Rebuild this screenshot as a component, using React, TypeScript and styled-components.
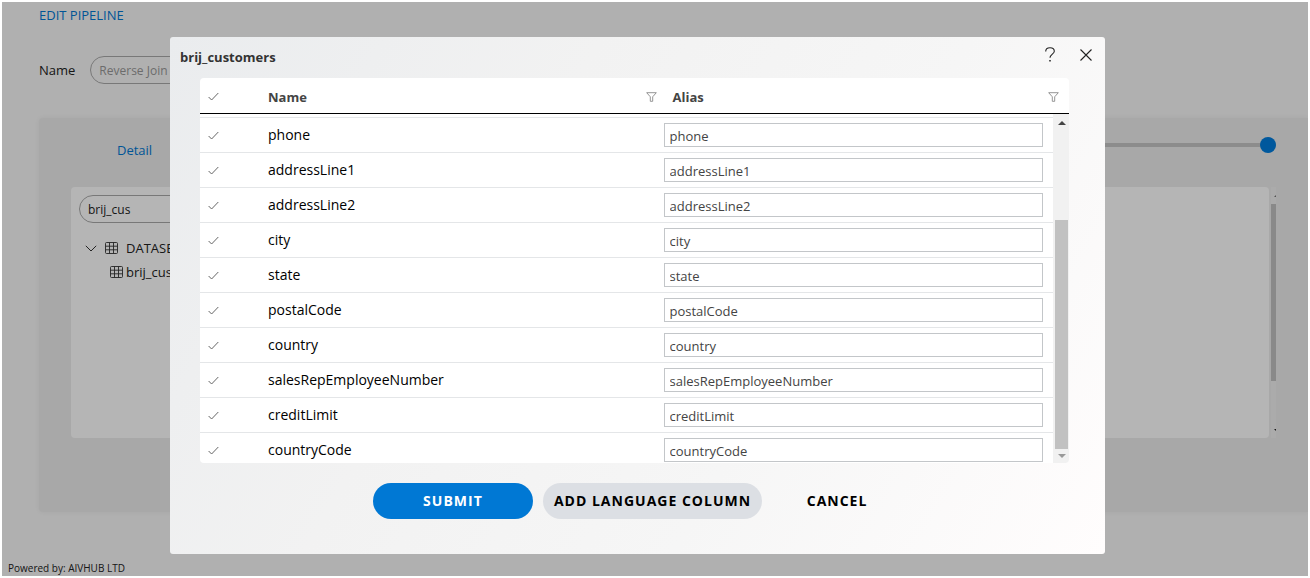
import React, { useState } from "react";
import styled, { createGlobalStyle } from "styled-components";

const GlobalStyle = createGlobalStyle`
  *, *::before, *::after { box-sizing: border-box; }
  html, body, #root { height: 100%; }
  body {
    margin: 0;
    background: #fff;
    color: #222;
    font-family: "Open Sans", "Noto Sans", sans-serif;
    font-size: 13px;
    line-height: 20px;
    overflow: hidden;
  }
  button, input { font: inherit; color: inherit; }
`;

const Frame = styled.div`
  height: 100%;
  padding: 2px;
`;

const Page = styled.div`
  position: relative;
  height: 100%;
  display: flex;
  flex-direction: column;
  background: #f8f8f8;
  overflow: hidden;
`;

const Content = styled.main`
  flex: 1;
  min-height: 0;
  display: flex;
  flex-direction: column;
  padding: 3px 0 46px 37px;
`;

const PageTitle = styled.h1`
  margin: 0;
  color: #0078d4;
  font-size: 13px;
  font-weight: 500;
  line-height: 20px;
`;

const NameRow = styled.div`
  display: flex;
  align-items: center;
  gap: 15px;
  margin: 31px 0 34px;
`;

const PillInput = styled.input<{ $muted?: boolean }>`
  width: ${(p) => (p.$muted ? 260 : 240)}px;
  height: 28px;
  padding: 0 8px;
  border: 1px solid #aaa;
  border-radius: 14px;
  background: transparent;
  color: ${(p) => (p.$muted ? "#999" : "#222")};
  font-size: 12px;
  outline: none;
`;

const Panel = styled.section`
  flex: 1;
  display: flex;
  flex-direction: column;
  padding: 17px 32px 74px;
  border-radius: 4px 0 0 4px;
  background: #ededed;
  box-shadow: 0 0 5px rgba(0, 0, 0, 0.06);
`;

const StepBar = styled.div`
  display: flex;
  justify-content: space-between;
  height: 52px;
`;

const StepLink = styled.a`
  margin: 5px 0 0 46px;
  height: 20px;
  color: #0078d4;
  text-decoration: none;
`;

const Slider = styled.input`
  appearance: none;
  width: 320px;
  height: 20px;
  margin: 0;
  background: transparent;

  &::-webkit-slider-runnable-track {
    height: 4px;
    background: #c6c6c6;
  }
  &::-webkit-slider-thumb {
    appearance: none;
    width: 16px;
    height: 16px;
    margin-top: -6px;
    border-radius: 50%;
    background: #007ddd;
  }
`;

const Workspace = styled.div`
  flex: 1;
  display: flex;
  gap: 2px;
`;

const Card = styled.div`
  flex: 1;
  padding: 8px;
  border-radius: 4px;
  background: #fff;
`;

const EdgeScroll = styled.div`
  width: 5px;
  display: flex;
  flex-direction: column;
  background: #f1f1f1;
`;

const EdgeGap = styled.div`
  height: 17px;
  padding: 8px 0 0 3px;
`;

const EdgeThumb = styled.div`
  flex: 178;
  background: #c1c1c1;
`;

const EdgeRest = styled.div`
  flex: 40;
`;

const Tree = styled.ul`
  margin: 13px 0 0;
  padding: 0;
  list-style: none;
`;

const TreeItem = styled.li<{ $level: number }>`
  display: flex;
  align-items: center;
  gap: ${(p) => (p.$level ? 3 : 8)}px;
  height: 24px;
  padding-left: ${(p) => (p.$level ? 31 : 6)}px;
`;

const PageFooter = styled.footer`
  padding: 0 6px;
  height: 18px;
  font-size: 10px;
  line-height: 20px;
`;

const Overlay = styled.div`
  position: absolute;
  inset: 0;
  display: flex;
  padding: 35px 203px 22px 168px;
  background: rgba(0, 0, 0, 0.29);
`;

const Dialog = styled.div`
  flex: 1;
  min-width: 0;
  display: flex;
  flex-direction: column;
  border-radius: 3px;
  background: linear-gradient(120deg, #eaecee 0%, #f2f2f2 35%, #f6f6f6 65%, #fffdfd 100%);
`;

const DialogHeader = styled.header`
  display: flex;
  align-items: center;
  height: 41px;
  padding: 0 10px 2px;
`;

const DialogTitle = styled.h2`
  flex: 1;
  margin: 0;
  color: #333;
  font-size: 13px;
  font-weight: 700;
  line-height: 20px;
`;

const IconButton = styled.button`
  display: grid;
  place-items: center;
  width: 18px;
  height: 18px;
  margin: 0 0 4px 18px;
  padding: 0;
  border: 0;
  background: none;
  color: #222;
`;

const GridBox = styled.div`
  position: relative;
  flex: 1;
  min-height: 0;
  display: flex;
  margin: 0 36px 0 30px;
  border-radius: 4px;
  background: #fff;
  overflow: hidden;
`;

const Table = styled.table`
  flex: 1;
  display: flex;
  flex-direction: column;
`;

const TableHead = styled.thead`
  display: block;
  border-bottom: 1px solid #000;
`;

const TableBody = styled.tbody`
  flex: 1;
  min-height: 0;
  display: block;
  padding: 3px 16px 0 0;
  overflow: hidden;
`;

const Row = styled.tr`
  display: grid;
  grid-template-columns: 60px 1fr 1fr;
  height: 35px;
  border-bottom: 1px solid #e4e6e8;

  ${TableHead} & {
    border-bottom: 0;
  }
  ${TableBody} &:first-child {
    height: 36px;
    border-top: 1px solid #e4e6e8;
  }
`;

const HeadCell = styled.th`
  display: flex;
  align-items: center;
  justify-content: space-between;
  padding: 2px 8px 0;
  color: #444;
  font-size: 13px;
  font-weight: 700;
  text-align: left;

  &:last-child {
    padding-right: 10px;
  }
`;

const Cell = styled.td`
  display: flex;
  align-items: center;
  padding: 0 10px 0 8px;
  color: #000;
  font-size: 14px;

  &:last-child {
    padding-left: 7px;
  }
`;

const CheckLabel = styled.label`
  position: relative;
  display: flex;
`;

const CheckInput = styled.input`
  position: absolute;
  inset: 0;
  margin: 0;
  opacity: 0;
`;

const AliasInput = styled.input`
  width: 100%;
  height: 24px;
  padding: 2px 5px 0;
  border: 1px solid #c3c6c9;
  border-radius: 0;
  background: #fff;
  color: #444;
  font-size: 13px;
  outline: none;
`;

const ScrollBar = styled.div`
  position: absolute;
  top: 36px;
  right: 0;
  bottom: 0;
  width: 16px;
  display: flex;
  flex-direction: column;
  padding: 0 1px 0 2px;
  background: #f1f1f1;
`;

const ScrollArrow = styled.div<{ $end?: boolean }>`
  display: grid;
  place-items: center;
  height: ${(p) => (p.$end ? 14 : 17)}px;
`;

const ScrollSpace = styled.div`
  flex: 89;
`;

const ScrollThumb = styled.div`
  flex: 230;
  background: #c1c1c1;
`;

const Actions = styled.footer`
  display: flex;
  justify-content: center;
  gap: 10px;
  padding: 20px 30px 35px;
`;

const ActionButton = styled.button<{ $kind: "primary" | "neutral" | "plain" }>`
  min-width: ${(p) => (p.$kind === "plain" ? 130 : 160)}px;
  height: 36px;
  padding: 0 11px;
  border: 0;
  border-radius: 18px;
  background: ${(p) =>
    p.$kind === "primary" ? "#0078d4" : p.$kind === "neutral" ? "#dcdfe4" : "transparent"};
  color: ${(p) => (p.$kind === "primary" ? "#fff" : "#000")};
  font-weight: 700;
  font-size: 14px;
  letter-spacing: 1px;
`;

const Tick = () => (
  <svg width="11" height="9" viewBox="0 0 11 9" fill="none" stroke="#666" aria-hidden="true">
    <path d="M.6 5 3.6 8 10.3 1" />
  </svg>
);

const Funnel = () => (
  <svg width="11" height="10" viewBox="0 0 11 10" fill="none" stroke="#8a8a8a" aria-hidden="true">
    <path d="M.7 .7H10.3L6.7 4.8V9.3H4.3V4.8Z" strokeWidth=".9" />
  </svg>
);

const TableGlyph = () => (
  <svg width="13" height="12" viewBox="0 0 13 12" fill="none" stroke="#333" strokeWidth=".9" aria-hidden="true">
    <rect x=".5" y=".5" width="12" height="11" rx="1" />
    <path d="M.5 4.2H12.5M.5 7.8H12.5M4.5 .5V11.5M8.5 .5V11.5" />
  </svg>
);

const Chevron = () => (
  <svg width="12" height="7" viewBox="0 0 12 7" fill="none" stroke="#333" aria-hidden="true">
    <path d="M.8 .8 6 6 11.2 .8" />
  </svg>
);

const Arrow = ({ down, color }: { down?: boolean; color: string }) => (
  <svg width="8" height="4" viewBox="0 0 8 4" fill={color} aria-hidden="true">
    <path d={down ? "M0 0H8L4 4Z" : "M0 4H8L4 0Z"} />
  </svg>
);

const columns = [
  "phone",
  "addressLine1",
  "addressLine2",
  "city",
  "state",
  "postalCode",
  "country",
  "salesRepEmployeeNumber",
  "creditLimit",
  "countryCode",
];

function ColumnRow({ name }: { name: string }) {
  const [alias, setAlias] = useState(name);
  return (
    <Row>
      <Cell>
        <CheckLabel>
          <CheckInput type="checkbox" defaultChecked aria-label={`Select ${name}`} />
          <Tick />
        </CheckLabel>
      </Cell>
      <Cell>{name}</Cell>
      <Cell>
        <AliasInput
          aria-label={`Alias for ${name}`}
          value={alias}
          onChange={(e) => setAlias(e.target.value)}
        />
      </Cell>
    </Row>
  );
}

export default function App() {
  return (
    <Frame>
      <GlobalStyle />
      <Page>
        <Content>
          <PageTitle>EDIT PIPELINE</PageTitle>
          <NameRow>
            <label htmlFor="pipeline-name">Name</label>
            <PillInput id="pipeline-name" $muted defaultValue="Reverse Join" />
          </NameRow>
          <Panel>
            <StepBar>
              <StepLink href="#detail">Detail</StepLink>
              <Slider type="range" min={0} max={100} defaultValue={100} aria-label="Step" />
            </StepBar>
            <Workspace>
              <Card>
                <PillInput aria-label="Search datasets" defaultValue="brij_cus" />
                <Tree>
                  <TreeItem $level={0}>
                    <Chevron />
                    <TableGlyph />
                    DATASET
                  </TreeItem>
                  <TreeItem $level={1}>
                    <TableGlyph />
                    brij_cus
                  </TreeItem>
                </Tree>
              </Card>
              <EdgeScroll>
                <EdgeGap>
                  <svg width="2" height="2" viewBox="0 0 2 2" fill="#777" display="block" aria-hidden="true">
                    <path d="M0 2 2 0V2Z" />
                  </svg>
                </EdgeGap>
                <EdgeThumb />
                <EdgeRest />
                <EdgeGap>
                  <svg width="2" height="2" viewBox="0 0 2 2" fill="#222" display="block" aria-hidden="true">
                    <path d="M0 0H2V2Z" />
                  </svg>
                </EdgeGap>
              </EdgeScroll>
            </Workspace>
          </Panel>
        </Content>
        <PageFooter>Powered by: AIVHUB LTD</PageFooter>

        <Overlay>
          <Dialog role="dialog" aria-modal="true" aria-labelledby="dialog-title">
            <DialogHeader>
              <DialogTitle id="dialog-title">brij_customers</DialogTitle>
              <IconButton type="button" aria-label="Help">
                <svg width="10" height="15" viewBox="0 0 10 15" fill="none" stroke="currentColor" strokeWidth="1.1">
                  <path d="M.7 4.4C.7 2.2 2.4.7 5 .7S9.3 2.2 9.3 4.2C9.3 7 5 7.3 5 10.8" />
                  <path d="M5 12.9V14.4" strokeWidth="1.5" />
                </svg>
              </IconButton>
              <IconButton type="button" aria-label="Close">
                <svg width="12" height="12" viewBox="0 0 12 12" fill="none" stroke="currentColor" strokeWidth="1.1">
                  <path d="M.5 .5 11.5 11.5M11.5 .5 .5 11.5" />
                </svg>
              </IconButton>
            </DialogHeader>
            <GridBox>
              <Table cellSpacing={0}>
                <TableHead>
                  <Row>
                    <HeadCell>
                      <CheckLabel>
                        <CheckInput type="checkbox" defaultChecked aria-label="Select all" />
                        <Tick />
                      </CheckLabel>
                    </HeadCell>
                    <HeadCell>
                      Name
                      <Funnel />
                    </HeadCell>
                    <HeadCell>
                      Alias
                      <Funnel />
                    </HeadCell>
                  </Row>
                </TableHead>
                <TableBody>
                  {columns.map((name) => (
                    <ColumnRow key={name} name={name} />
                  ))}
                </TableBody>
              </Table>
              <ScrollBar>
                <ScrollArrow>
                  <Arrow color="#444" />
                </ScrollArrow>
                <ScrollSpace />
                <ScrollThumb />
                <ScrollArrow $end>
                  <Arrow down color="#999" />
                </ScrollArrow>
              </ScrollBar>
            </GridBox>
            <Actions>
              <ActionButton type="button" $kind="primary">SUBMIT</ActionButton>
              <ActionButton type="button" $kind="neutral">ADD LANGUAGE COLUMN</ActionButton>
              <ActionButton type="button" $kind="plain">CANCEL</ActionButton>
            </Actions>
          </Dialog>
        </Overlay>
      </Page>
    </Frame>
  );
}
